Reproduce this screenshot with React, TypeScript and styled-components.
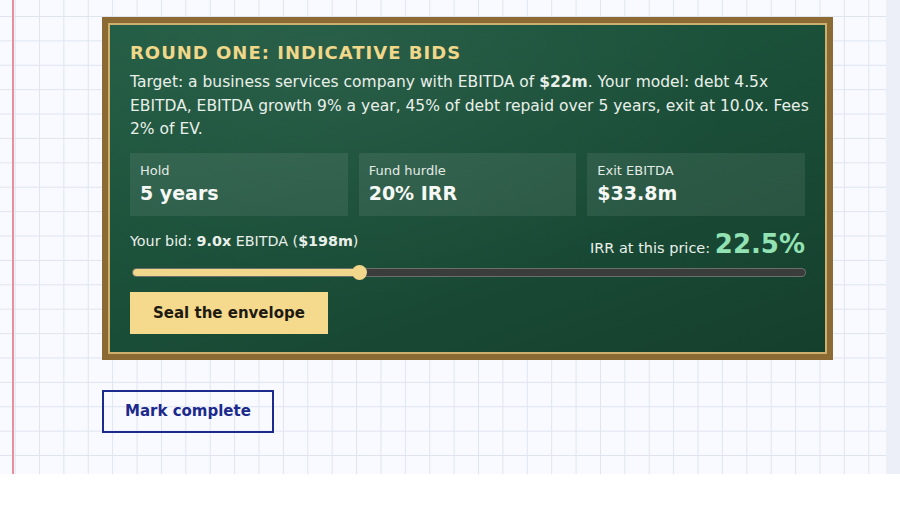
import styled, { createGlobalStyle } from 'styled-components'

const GlobalStyle = createGlobalStyle`
    html, body {
        margin: 0;
        padding: 0;
        background: #ffffff;
    }
    body {
        font-family: "DejaVu Sans", "Liberation Sans", sans-serif;
    }
`

interface Stat {
    label: string;
    value: string;
}

const stats: Stat[] = [
    { label: 'Hold', value: '5 years' },
    { label: 'Fund hurdle', value: '20% IRR' },
    { label: 'Exit EBITDA', value: '$33.8m' },
]

const MIN = 6
const MAX = 15
const bid = 9.0

function App() {
    const pct = (bid - MIN) / (MAX - MIN)
    const pos = `calc(${pct * 100}% + ${7 - pct * 14}px)`
    return (
        <Page>
            <GlobalStyle />
            <Paper>
                <Board>
                    <Title>Round one: indicative bids</Title>
                    <Brief>
                        Target: a business services company with EBITDA of <b>$22m</b>. Your model: debt 4.5x
                        EBITDA, EBITDA growth 9% a year, 45% of debt repaid over 5 years, exit at 10.0x. Fees
                        2% of EV.
                    </Brief>
                    <Stats>
                        {stats.map(s => (
                            <StatBox key={s.label}>
                                <StatLabel>{s.label}</StatLabel>
                                <StatValue>{s.value}</StatValue>
                            </StatBox>
                        ))}
                    </Stats>
                    <BidRow>
                        <BidText>
                            Your bid: <b>9.0x</b> EBITDA (<b>$198m</b>)
                        </BidText>
                        <Irr>
                            IRR at this price: <IrrValue>22.5%</IrrValue>
                        </Irr>
                    </BidRow>
                    <Slider>
                        <Track>
                            <Fill style={{ width: pos }} />
                        </Track>
                        <Thumb style={{ left: pos }} />
                    </Slider>
                    <SealButton>Seal the envelope</SealButton>
                </Board>
                <CompleteButton>Mark complete</CompleteButton>
            </Paper>
        </Page>
    )
}

const Page = styled.div`
    display: flex;
    height: 474px;
    background: #eceef8;
`

const Paper = styled.div`
    width: 886px;
    height: 474px;
    box-sizing: border-box;
    padding: 17px 0 0 102px;
    background-color: #f8faff;
    background-image:
        linear-gradient(90deg, transparent 12px, #e5909c 12px, #e5909c 14px, transparent 14px),
        linear-gradient(#dfe4ef 1px, transparent 1px),
        linear-gradient(90deg, #dfe4ef 1px, transparent 1px);
    background-size: 100% 100%, 24.4px 24.4px, 24.4px 24.4px;
    background-repeat: no-repeat, repeat, repeat;
    background-position: 0 0, 0 16px, 14.6px 0;
`

const Board = styled.div`
    width: 731px;
    box-sizing: border-box;
    padding: 18px 22px 20px;
    border: 6px solid #8c6a33;
    box-shadow: inset 0 0 0 2px #cdb06e;
    background:
        radial-gradient(ellipse at 30% 10%, rgba(255, 255, 255, 0.05), transparent 60%),
        linear-gradient(160deg, #1f5a41 0%, #1a4d37 55%, #153f2d 100%);
    color: #e9f0ea;
`

const Title = styled.h2`
    margin: 0 0 6px;
    font-size: 18px;
    font-weight: bold;
    letter-spacing: 1px;
    text-transform: uppercase;
    color: #f0d789;
    line-height: 24px;
`

const Brief = styled.p`
    margin: 0 -12px 11px 0;
    font-size: 15.5px;
    line-height: 23.5px;
`

const Stats = styled.div`
    display: grid;
    grid-template-columns: repeat(3, 1fr);
    gap: 11px;
    margin-bottom: 12px;
`

const StatBox = styled.div`
    height: 63px;
    box-sizing: border-box;
    padding: 9px 10px;
    background: rgba(255, 255, 255, 0.08);
`

const StatLabel = styled.div`
    font-size: 13px;
    line-height: 18px;
    color: #e3ebe5;
`

const StatValue = styled.div`
    font-size: 19px;
    font-weight: bold;
    line-height: 26px;
    color: #f5f8f5;
`

const BidRow = styled.div`
    display: flex;
    justify-content: space-between;
    align-items: flex-start;
`

const BidText = styled.div`
    font-size: 14.3px;
    line-height: 22px;
    padding-top: 2px;
`

const Irr = styled.div`
    font-size: 14.5px;
    line-height: 32px;
`

const IrrValue = styled.span`
    font-size: 26px;
    font-weight: bold;
    color: #93e2b3;
`

const Slider = styled.div`
    position: relative;
    height: 16px;
    margin: 1px 0 11px 3px;
    display: flex;
    align-items: center;
`

const Track = styled.div`
    position: relative;
    flex: 1;
    height: 7px;
    border-radius: 4px;
    background: #3a3d3b;
    box-shadow: 0 0 0 1px #6b6f6c;
    overflow: hidden;
`

const Fill = styled.div`
    height: 100%;
    background: #f1d78b;
`

const Thumb = styled.div`
    position: absolute;
    top: 0;
    width: 15px;
    height: 15px;
    margin-left: -7.5px;
    border-radius: 50%;
    background: #f1d78b;
`

const SealButton = styled.button`
    display: block;
    height: 42px;
    padding: 0 23px;
    border: none;
    background: #f5d98c;
    color: #1d1a12;
    font-family: "DejaVu Sans", sans-serif;
    font-size: 15px;
    font-weight: bold;
`

const CompleteButton = styled.button`
    display: block;
    margin-top: 30px;
    height: 43px;
    padding: 0 21px;
    border: 2px solid #1c2a8c;
    background: transparent;
    color: #1c2a8c;
    font-family: "DejaVu Sans", sans-serif;
    font-size: 15px;
    font-weight: bold;
`

export default App
